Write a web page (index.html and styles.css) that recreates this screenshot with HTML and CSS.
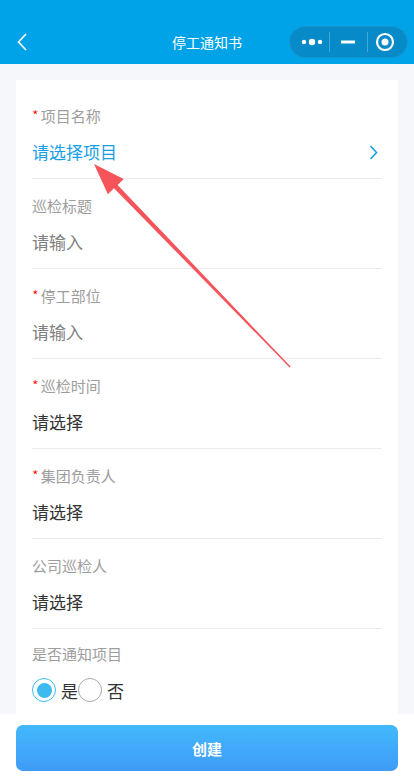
FILE: index.html
```html
<!DOCTYPE html>
<html lang="zh-CN">
<head>
<meta charset="UTF-8">
<meta name="viewport" content="width=device-width, initial-scale=1.0">
<title>停工通知书</title>
<link rel="stylesheet" href="styles.css">
</head>
<body>
<div class="page">
    <div class="navbar">
        <div class="nav-left">
            <svg class="back" width="10" height="18" viewBox="0 0 10 18"><path d="M9 1 L1.5 9 L9 17" fill="none" stroke="#fff" stroke-width="1.6"/></svg>
        </div>
        <div class="nav-title">停工通知书</div>
        <div class="nav-right">
            <div class="capsule">
                <svg width="119" height="32" viewBox="0 0 119 32">
                    <circle cx="15" cy="16" r="2.2" fill="#fff"/>
                    <circle cx="23" cy="16" r="3.2" fill="#fff"/>
                    <circle cx="31" cy="16" r="2.2" fill="#fff"/>
                    <rect x="40" y="6" width="1" height="20" fill="rgba(255,255,255,0.25)"/>
                    <rect x="52" y="14.5" width="14" height="3" fill="#fff"/>
                    <rect x="78" y="6" width="1" height="20" fill="rgba(255,255,255,0.25)"/>
                    <circle cx="96" cy="16" r="8" fill="none" stroke="#fff" stroke-width="2.2"/>
                    <circle cx="96" cy="16" r="3.5" fill="#fff"/>
                </svg>
            </div>
        </div>
    </div>

    <div class="content">
        <div class="card">
            <div class="field">
                <div class="label"><span class="req">*</span>项目名称</div>
                <div class="value picker active">
                    <span>请选择项目</span>
                    <svg width="9" height="15" viewBox="0 0 9 15"><path d="M1.5 1 L7.5 7.5 L1.5 14" fill="none" stroke="#18a0e6" stroke-width="1.6"/></svg>
                </div>
            </div>
            <div class="field">
                <div class="label">巡检标题</div>
                <div class="value placeholder">请输入</div>
            </div>
            <div class="field">
                <div class="label"><span class="req">*</span>停工部位</div>
                <div class="value placeholder">请输入</div>
            </div>
            <div class="field">
                <div class="label"><span class="req">*</span>巡检时间</div>
                <div class="value">请选择</div>
            </div>
            <div class="field">
                <div class="label"><span class="req">*</span>集团负责人</div>
                <div class="value">请选择</div>
            </div>
            <div class="field">
                <div class="label">公司巡检人</div>
                <div class="value">请选择</div>
            </div>
            <div class="field last">
                <div class="label">是否通知项目</div>
                <div class="radios">
                    <span class="radio checked"></span><span class="radio-text">是</span>
                    <span class="radio"></span><span class="radio-text">否</span>
                </div>
            </div>
        </div>
    </div>

    <div class="footer">
        <button class="submit">创建</button>
    </div>

    <svg class="arrow" width="414" height="780" viewBox="0 0 414 780">
        <polygon points="94,164 123.7,179 117.6,184.9 290.6,366.6 289.6,367.4 114,188.3 107.9,194.2" fill="#f4545a"/>
    </svg>
</div>
</body>
</html>
```

FILE: styles.css
```css
body {
    margin: 0;
    font-family: "Noto Sans CJK SC", "Noto Sans", sans-serif;
    background-color: #f5f7fa;
}
.page {
    position: relative;
    width: 414px;
    height: 780px;
    overflow: hidden;
}
.navbar {
    height: 64px;
    box-sizing: border-box;
    padding-top: 20px;
    background-color: #00a3e8;
    display: grid;
    grid-template-columns: 1fr auto 1fr;
    align-items: center;
}
.nav-left {
    padding-left: 17px;
    display: flex;
    align-items: center;
}
.nav-title {
    color: #fff;
    font-size: 14px;
    line-height: 20px;
}
.nav-right {
    display: flex;
    justify-content: flex-end;
    padding-right: 6px;
}
.capsule {
    width: 119px;
    height: 32px;
    box-sizing: border-box;
    border-radius: 16px;
    background-color: #078bc8;
    border: 1px solid #1595d0;
    display: flex;
    align-items: center;
    justify-content: center;
}
.capsule svg {
    display: block;
    flex-shrink: 0;
}
.content {
    padding: 16px 16px 0;
}
.card {
    background-color: #fff;
    padding: 9px 16px 0;
    height: 634px;
    box-sizing: border-box;
}
.field {
    padding: 17px 0 14px;
    border-bottom: 1px solid #ebebeb;
}
.field.last {
    border-bottom: none;
    padding-top: 15px;
}
.label {
    font-size: 15px;
    line-height: 20px;
    color: #9d9d9d;
    margin-bottom: 14px;
}
.req {
    color: #f00;
    margin-right: 2px;
    font-weight: 300;
}
.value {
    font-size: 17px;
    line-height: 24px;
    color: #333;
}
.value.placeholder {
    color: #808080;
}
.picker {
    display: flex;
    justify-content: space-between;
    align-items: center;
}
.picker svg {
    margin-right: 4px;
}
.value.active {
    color: #18a0e6;
}
.radios {
    display: flex;
    align-items: center;
    height: 24px;
}
.radio {
    width: 24px;
    height: 24px;
    box-sizing: border-box;
    border: 1px solid #aaa;
    border-radius: 50%;
    display: flex;
    align-items: center;
    justify-content: center;
}
.radio.checked {
    border-color: #3dbbee;
}
.radio.checked::after {
    content: "";
    width: 15px;
    height: 15px;
    border-radius: 50%;
    background-color: #3dbbee;
}
.radio-text {
    font-size: 17px;
    color: #333;
    margin-left: 5px;
}
.footer {
    background-color: #fff;
    padding: 11px 16px 9px;
}
.submit {
    display: block;
    width: 100%;
    height: 46px;
    border: none;
    border-radius: 7px;
    background: linear-gradient(#43b9fd, #3f9bf7);
    color: #fff;
    font-family: "Noto Sans CJK SC", sans-serif;
    font-size: 15px;
    font-weight: bold;
}
.arrow {
    position: absolute;
    left: 0;
    top: 0;
    pointer-events: none;
}
```
